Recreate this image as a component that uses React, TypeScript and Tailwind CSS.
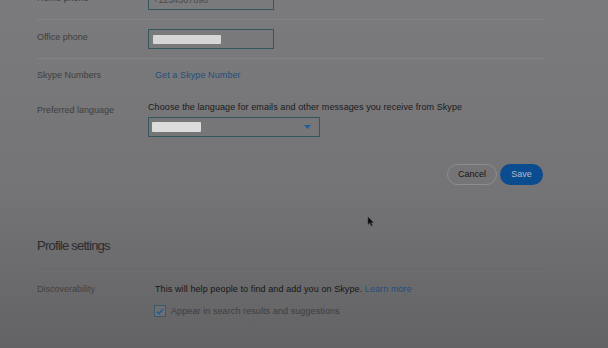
import React from "react";

const FONT = { fontFamily: '"Liberation Sans", Arial, sans-serif' };

/**
 * Label column used by every settings row
 */
function RowLabel({ children, className = "" }: { children: React.ReactNode; className?: string }) {
  return (
    <div className={`w-[111px] shrink-0 text-[9px] leading-[12px] text-[#403f41] ${className}`}>
      {children}
    </div>
  );
}

/**
 * Boxed text field as seen on the dimmed page
 */
function PhoneField({ placeholder, redacted }: { placeholder?: string; redacted?: boolean }) {
  return (
    <div className="w-[126px] h-[20px] border border-[#34575f] flex items-center px-[4px]">
      {redacted ? (
        <div className="w-[68px] h-[9px] bg-[#d6d6d6] rounded-[1px] blur-[0.3px]" />
      ) : (
        <span className="text-[9px] leading-[12px] text-[#4a494c]">{placeholder}</span>
      )}
    </div>
  );
}

function Cursor() {
  return (
    <svg className="absolute left-[367px] top-[216px]" width="7" height="11" viewBox="0 0 7 11" aria-hidden="true">
      <path d="M1 1 L1 8.5 L2.8 6.8 L4.2 10 L5.3 9.5 L4 6.4 L6.4 6.4 Z" fill="#0b0b0c" stroke="#3a393b" strokeWidth="0.5" />
    </svg>
  );
}

export default function App() {
  return (
    <div
      className="relative w-[608px] h-[348px] overflow-hidden bg-gradient-to-b from-[#7b7a7c] via-[#747375] via-55% to-[#636264]"
      style={FONT}
    >
      <div className="ml-[37px] w-[508px]">
        {/* Home phone */}
        <div className="-mt-[19px] py-[9px] flex border-b border-[#838284]">
          <RowLabel className="pt-[2px]">Home phone</RowLabel>
          <PhoneField placeholder="+1234567890" />
        </div>

        {/* Office phone */}
        <div className="py-[9px] flex border-b border-[#828183]">
          <RowLabel className="pt-[2px]">Office phone</RowLabel>
          <PhoneField redacted />
        </div>

        {/* Skype numbers */}
        <div className="pt-[10px] flex">
          <RowLabel>Skype Numbers</RowLabel>
          <a className="ml-[7px] text-[9px] leading-[12px] tracking-[0.01em] text-[#24507c]">Get a Skype Number</a>
        </div>

        {/* Preferred language */}
        <div className="pt-[20px] flex">
          <RowLabel className="pt-[3px]">Preferred language</RowLabel>
          <div>
            <p className="text-[9px] leading-[12px] tracking-[0.01em] text-[#1a1a1c] mb-[4px]">
              Choose the language for emails and other messages you receive from Skype
            </p>
            <div className="w-[172px] h-[20px] border border-[#34575f] flex items-center justify-between pl-[3px] pr-[8px]">
              <div className="w-[49px] h-[10px] bg-[#dcdcdc] rounded-[1px]" />
              <svg width="7" height="4" viewBox="0 0 7 4" aria-hidden="true">
                <path d="M0 0 H7 L3.5 4 Z" fill="#1f5f9e" />
              </svg>
            </div>
          </div>
        </div>

        {/* Actions */}
        <div className="mt-[27px] mr-[2px] flex justify-end gap-[3px]">
          <button className="w-[50px] h-[21px] rounded-full border border-[#8e8d8f] text-[9px] text-[#151517]">
            Cancel
          </button>
          <button className="w-[43px] h-[21px] rounded-full bg-[#0b4b8f] text-[9px] text-[#b0bccd]">
            Save
          </button>
        </div>

        {/* Profile settings */}
        <h2 className="mt-[53px] pb-[17px] border-b border-[#6f6e70] text-[13px] leading-[16px] font-light tracking-[-0.06em] text-[#2c2c2e]">
          Profile settings
        </h2>

        <div className="pt-[11px] flex">
          <RowLabel className="text-[#434244]">Discoverability</RowLabel>
          <div className="ml-[7px]">
            <p className="text-[9px] leading-[12px] tracking-[0.01em] text-[#161618]">
              This will help people to find and add you on Skype.{" "}
              <a className="text-[#23507e]">Learn more</a>
            </p>
            <label className="mt-[10px] -ml-[1px] flex items-center gap-[5px]">
              <span className="w-[12px] h-[12px] border border-[#385a6c] bg-[#6e6d6f] flex items-center justify-center">
                <svg width="8" height="7" viewBox="0 0 8 7" aria-hidden="true">
                  <path d="M1 3.8 L3 5.8 L7 1" fill="none" stroke="#1e5b96" strokeWidth="1.4" />
                </svg>
              </span>
              <span className="text-[9px] leading-[12px] tracking-[0.01em] text-[#3f3e40]">
                Appear in search results and suggestions
              </span>
            </label>
          </div>
        </div>
      </div>

      <Cursor />
    </div>
  );
}
